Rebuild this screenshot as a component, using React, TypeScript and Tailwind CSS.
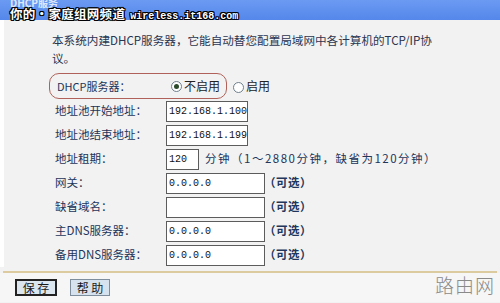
import React from "react";

const cjk = { fontFamily: '"Noto Sans CJK SC", "Noto Sans", sans-serif' };
const mono = { fontFamily: '"Liberation Mono", "DejaVu Sans Mono", monospace' };

function Radio({ checked }: { checked?: boolean }) {
  return (
    <span className="inline-flex h-[11px] w-[11px] items-center justify-center rounded-full border border-[#6d7f8c] bg-white">
      {checked && <span className="h-[5px] w-[5px] rounded-full bg-[#2c4a2c]" />}
    </span>
  );
}

function Field({ value, w }: { value: string; w: string }) {
  return (
    <div
      className={`flex h-[21px] items-center border border-[#5c5c5c] bg-white pl-[2px] text-[10px] text-[#111] ${w}`}
      style={mono}
    >
      {value}
    </div>
  );
}

function Row({ label, children }: { label: string; children: React.ReactNode }) {
  return (
    <div className="flex h-[24px] items-center">
      <div className="w-[111px] text-[11.5px] text-[#22355a]">{label}</div>
      {children}
    </div>
  );
}

export default function App() {
  const opt = (
    <span className="ml-[-1px] text-[11.5px] font-bold tracking-[0.5px] text-[#22355a]">（可选）</span>
  );
  return (
    <div className="relative h-[303px] w-[500px] overflow-hidden bg-[#f2f2f2]" style={cjk}>
      {/* top bar */}
      <div className="relative h-[20px] w-full bg-gradient-to-b from-[#6b9af2] to-[#5487ea]">
        <div className="absolute left-[10px] top-[-3px] text-[10px] font-bold leading-[12px] text-[#dfe8fb]">
          DHCP服务
        </div>
        <div
          className="absolute left-[10px] top-[6px] flex items-baseline whitespace-nowrap text-white"
          style={{
            textShadow:
              "1px 0 0 #000,-1px 0 0 #000,0 1px 0 #000,0 -1px 0 #000,1px 1px 0 #000,-1px -1px 0 #000,1px -1px 0 #000,-1px 1px 0 #000",
          }}
        >
          <span className="text-[12.5px] font-bold leading-[16px] tracking-[0.3px]">你的•家庭组网频道</span>
          <span className="ml-[5px] text-[10px] font-bold leading-[16px]" style={mono}>
            wireless.it168.com
          </span>
        </div>
      </div>

      <div className="border-l-[4px] border-white">
        {/* description */}
        <div className="pl-[48px] pt-[11px] text-[11.6px] leading-[18px] text-[#2a3550]">
          <div className="whitespace-nowrap">本系统内建DHCP服务器，它能自动替您配置局域网中各计算机的TCP/IP协</div>
          <div>议。</div>
        </div>

        {/* DHCP server box */}
        <div className="ml-[45px] mt-[6px] flex h-[26px] w-[300px] items-center">
          <div className="flex h-[26px] w-[178px] items-center rounded-[10px] border border-[#b0625a] pl-[7px]">
            <span className="w-[114px] text-[11px] text-[#22355a]">DHCP服务器：</span>
            <Radio checked />
            <span className="ml-[2px] text-[12px] text-[#222]">不启用</span>
          </div>
          <span className="ml-[6px]">
            <Radio />
          </span>
          <span className="ml-[2px] text-[12px] text-[#222]">启用</span>
        </div>

        {/* fields */}
        <div className="pl-[51px]">
          <Row label="地址池开始地址：">
            <Field value="192.168.1.100" w="w-[82px]" />
          </Row>
          <Row label="地址池结束地址：">
            <Field value="192.168.1.199" w="w-[82px]" />
          </Row>
          <Row label="地址租期：">
            <Field value="120" w="w-[33px]" />
            <span className="ml-[6px] whitespace-nowrap text-[11.5px] tracking-[1.5px] text-[#22355a]">
              分钟（1～2880分钟，缺省为120分钟）
            </span>
          </Row>
          <Row label="网关：">
            <Field value="0.0.0.0" w="w-[99px]" />
            {opt}
          </Row>
          <Row label="缺省域名：">
            <Field value="" w="w-[99px]" />
            {opt}
          </Row>
          <Row label="主DNS服务器：">
            <Field value="0.0.0.0" w="w-[99px]" />
            {opt}
          </Row>
          <Row label="备用DNS服务器：">
            <Field value="0.0.0.0" w="w-[99px]" />
            {opt}
          </Row>
        </div>
      </div>

      {/* separator */}
      <div className="mx-[3px] mt-[4px] h-[2px] bg-[#dccb9e]" />

      {/* bottom */}
      <div className="flex h-[29px] items-start justify-between bg-[#f6f6f6] pl-[15px] pr-[5px]">
        <div className="mt-[6px] flex gap-[13px]">
          <button className="flex h-[17px] w-[42px] items-center justify-center border-2 border-[#222] bg-[#dbe6ef] text-[12px] leading-none text-[#1a1a1a]">
            保 存
          </button>
          <button className="flex h-[17px] w-[40px] items-center justify-center border border-[#7f8e9c] bg-[#d6e3ef] text-[12px] leading-none text-[#1a1a1a]">
            帮 助
          </button>
        </div>
        <div className="mt-[-1px] text-[19px] font-light leading-[26px] tracking-[1px] text-[#8a8a8a]">路由网</div>
      </div>
    </div>
  );
}
